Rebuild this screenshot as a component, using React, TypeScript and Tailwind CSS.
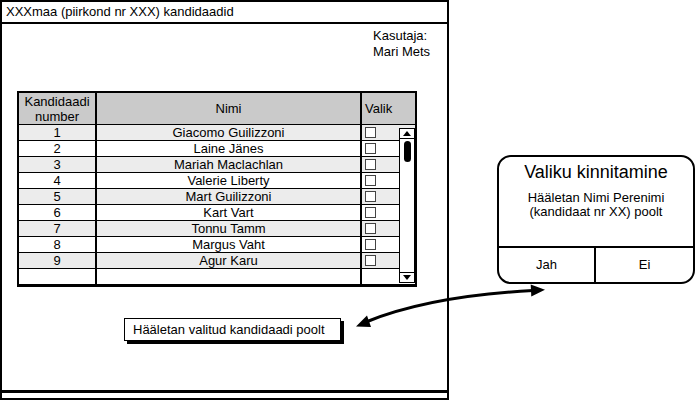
import React from 'react';

const candidates = [
  'Giacomo Guilizzoni',
  'Laine Jänes',
  'Mariah Maclachlan',
  'Valerie Liberty',
  'Mart Guilizzoni',
  'Kart Vart',
  'Tonnu Tamm',
  'Margus Vaht',
  'Agur Karu',
  '',
];

function ScrollBar() {
  return (
    <div className="absolute right-0 top-[3px] bottom-[2px] w-[16px] border-[1.5px] border-black bg-white flex flex-col items-center">
      <div className="w-full h-[10px] border-b border-black flex items-center justify-center">
        <svg width="8" height="5" viewBox="0 0 8 5">
          <polygon points="0,5 4,0 8,5" fill="#000" />
        </svg>
      </div>
      <div className="mt-[2px] w-[7px] h-[21px] rounded-full bg-black" />
      <div className="flex-1" />
      <div className="w-full h-[10px] border-t border-black flex items-center justify-center">
        <svg width="8" height="5" viewBox="0 0 8 5">
          <polygon points="0,0 8,0 4,5" fill="#000" />
        </svg>
      </div>
    </div>
  );
}

function CandidateTable() {
  return (
    <div className="w-[400px] border-2 border-black text-[13px]">
      <div className="flex h-[32px] bg-[#cacaca] border-b border-black">
        <div className="w-[78px] border-r-2 border-black flex flex-col items-center justify-center leading-[15px]">
          <span>Kandidaadi</span>
          <span>number</span>
        </div>
        <div className="w-[265px] border-r-2 border-black flex items-center justify-center">Nimi</div>
        <div className="flex-1 flex items-center pl-[3px]">Valik</div>
      </div>
      <div className="relative">
        {candidates.map((name, i) => (
          <div
            key={i}
            className={`flex h-[16px] leading-[15px] border-b border-black last:border-b-0 ${i % 2 === 0 && name ? 'bg-[#ececec]' : 'bg-white'}`}
          >
            <div className="w-[78px] border-r-2 border-black text-center">{name ? i + 1 : ''}</div>
            <div className="w-[265px] border-r-2 border-black text-center">{name}</div>
            <div className="flex-1 flex items-center pl-[3px]">
              {name && <div className="w-[11px] h-[11px] border border-[#444] bg-white" />}
            </div>
          </div>
        ))}
        <ScrollBar />
      </div>
    </div>
  );
}

function ConfirmDialog() {
  return (
    <div className="w-[198px] h-[129px] border-2 border-black rounded-[14px] bg-white flex flex-col overflow-hidden">
      <div className="flex-1 flex flex-col items-center">
        <div className="mt-[4px] text-[18px] leading-[22px]">Valiku kinnitamine</div>
        <div className="mt-[8px] text-[13px] leading-[14px] text-center">
          Hääletan Nimi Perenimi
          <br />
          (kandidaat nr XX) poolt
        </div>
      </div>
      <div className="h-[36px] border-t-2 border-black flex text-[13px]">
        <div className="w-[97px] border-r-2 border-black flex items-center justify-center">Jah</div>
        <div className="flex-1 flex items-center justify-center">Ei</div>
      </div>
    </div>
  );
}

export default function App() {
  return (
    <div className="relative w-[696px] h-[400px] bg-white text-black font-['Liberation_Sans',Arial,sans-serif] flex overflow-hidden">
      <div className="w-[449px] h-[400px] border-2 border-black flex flex-col">
        <div className="h-[22px] border-b-2 border-black px-[4px] flex items-center text-[13px]">
          XXXmaa (piirkond nr XXX) kandidaadid
        </div>
        <div className="flex-1 flex flex-col pl-[15px]">
          <div className="ml-[356px] pt-[4px] text-[13px] leading-[16px]">
            <div>Kasutaja:</div>
            <div>Mari Mets</div>
          </div>
          <div className="mt-[31px]">
            <CandidateTable />
          </div>
          <div className="mt-[30px] ml-[107px]">
            <button className="h-[23px] w-[217px] border-[1.5px] border-black bg-white text-[13px] text-left pl-[8px] shadow-[3px_3px_0_0_#000]">
              Hääletan valitud kandidaadi poolt
            </button>
          </div>
        </div>
        <div className="h-[8px] border-t-[3px] border-black" />
      </div>
      <div className="pt-[155px] pl-[48px]">
        <ConfirmDialog />
      </div>
      <svg className="absolute inset-0 pointer-events-none" width="696" height="400" viewBox="0 0 696 400">
        <path d="M366 322 Q430 296 533 290.6" fill="none" stroke="#000" strokeWidth="3" strokeLinecap="round" />
        <polygon points="356,326.5 371,327 367,315.5" fill="#000" />
        <polygon points="545,289.7 531.3,296.5 530.7,284.5" fill="#000" />
      </svg>
    </div>
  );
}
